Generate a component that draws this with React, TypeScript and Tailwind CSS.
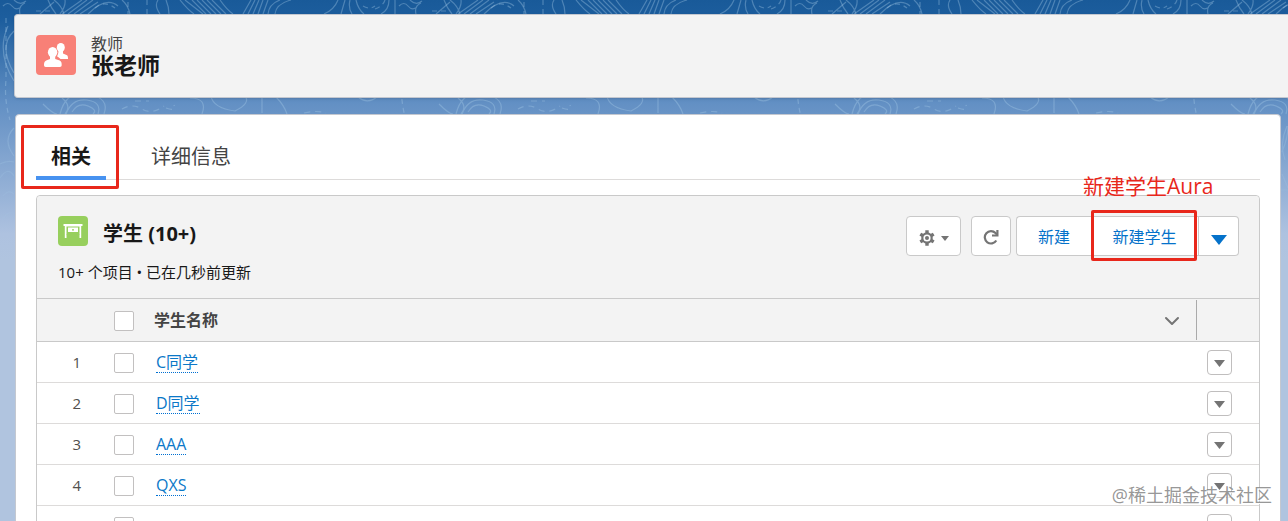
import { useState } from "react";
import { ChevronDown } from "lucide-react";

const students = ["C同学", "D同学", "AAA", "QXS", "zxc"];

const tabs = [
  { id: "related" as const, label: "相关" },
  { id: "details" as const, label: "详细信息" },
];

function Backdrop() {
  return (
    <svg className="absolute inset-0 h-full w-full" aria-hidden="true">
      <defs>
        <linearGradient id="sky" x1="0" y1="0" x2="0" y2="260" gradientUnits="userSpaceOnUse">
          <stop offset="0" stopColor="#195a99" />
          <stop offset="0.08" stopColor="#1d5e9e" />
          <stop offset="0.4" stopColor="#6390c4" />
          <stop offset="0.9" stopColor="#aec2e0" />
          <stop offset="1" stopColor="#b0c4df" />
        </linearGradient>
        <pattern id="contours" width="396" height="521" patternUnits="userSpaceOnUse">
          <g fill="none" stroke="#a9cdea" strokeOpacity="0.36" strokeWidth="1.2">
            <path d="M3 6q5-5 9 0t9 1M14 0q6 6 12 1M20 14q-2-8 5-11M54 0q8 6 10 14M48 0q3 8 8 14M60 14q6-8 5-14" />
            <path d="M40 14l14-12M62 14L82 0M68 14L87 0M74 14L93 0M80 14L98 2M88 14Q106-4 118 6M122 0q6 5 8 14M158 0q-4 6 2 14M166 0q3 7 3 14" />
            <path d="M180 0q8 10 14 14M185 0l18 14M192 0l14 14M197 0l14 14M202 0l14 14M207 0l14 14M212 0l14 14M220 0q7 10 13 14" />
            <path d="M243 14l8-14M248 14l7-14M253 14l6-14M258 14l5-14M263 14l5-14M268 14q1-10 12-14M275 14q1-10 16-14" />
            <path d="M324 14q10-4 14-14M341 14l4-14M350 0q-2 8 2 14M356 0q2 9 8 14M389 0q0 10-8 14M395 0v14" />
            <path strokeDasharray="5 4" d="M95 8q9-8 20 0M128 2v12M147 0v14M363 6q7 4 12 0M375 9q8-3 10-9M36 11h16M6 18v62q-2 20 4 40" />
            <path d="M60 114q6-24 28-20t16 20M66 114q6-16 21-14t11 14M72 112q6-10 16-6t5 8M43 104q10 10 14 10M62 98q10 8 3 16" />
            <path d="M190 98q18 0 12 16M211 96q2 12 24 15 16-8 10-15M262 97v16M276 97q8 8 11 17M358 97q10 8 20-1" />
            <path strokeDasharray="6 5" d="M122 109q10-6 20 0t22-3M166 108q10 4 8-3M135 101h14M304 113q14-3 22 0" />
            <path d="M14 31q-16 15 0 42M8 26q-12 26 6 55M14 128q-12 12 0 28M0 164q7-4 14-2M0 178q8-12 14-2M3 196q5-7 11-2M2 221q4-10 12-8" />
            <path d="M99 126q-8 18-2 34M94 152q6-14 6-26M93 190h7M94 174l6 14" />
          </g>
        </pattern>
        <linearGradient id="fade" x1="0" y1="0" x2="0" y2="1">
          <stop offset="0.2" stopColor="#fff" />
          <stop offset="0.5" stopColor="#000" />
        </linearGradient>
        <mask id="fadeMask">
          <rect width="100%" height="100%" fill="url(#fade)" />
        </mask>
      </defs>
      <rect width="100%" height="100%" fill="url(#sky)" />
      <rect width="100%" height="100%" fill="url(#contours)" mask="url(#fadeMask)" />
    </svg>
  );
}

function TeacherIcon() {
  return (
    <svg viewBox="0 0 40 40" className="size-10 rounded bg-[#f88077]" aria-hidden="true">
      <g fill="#fff">
        <ellipse cx="24.800" cy="12.500" rx="4" ry="4.500" />
        <path d="M22.500 15h4.500v3.500l4 1.800c.8.500 1 1.500 1 3.700h-7.500c-1-1.300-2.300-2.200-3.500-2.800 1-1.500 1.500-3.500 1.500-6.200z" />
      </g>
      <g fill="#fff" stroke="#f88077" strokeWidth="1.200" paintOrder="stroke">
        <path d="M14 20h5.200v4l4.500 1.600c1.500.7 2 2 2 4.400 0 1.200-.6 2-1.800 2H9.800C8.600 32 8 31.200 8 30c0-2.400.7-3.700 2.200-4.400L14 24z" />
      </g>
      <ellipse cx="16.600" cy="17.200" rx="4.700" ry="5.300" fill="#fff" />
    </svg>
  );
}

function DeskIcon() {
  return (
    <svg viewBox="0 0 30 30" className="size-[30px] rounded bg-[#97cf5d]" aria-hidden="true">
      <path fill="#fff" d="M5.500 8h19v2h-1.300v12h-1.700V18H8.500v4H6.800V10H5.500z" />
      <path fill="#97cf5d" d="M8.500 10.500h13v8h-13z" />
      <path fill="#fff" d="M10 11.500h10v4.500H10z" />
      <path fill="#97cf5d" d="M14 13.200h2v1.300h-2z" />
    </svg>
  );
}

function GearIcon() {
  return (
    <svg viewBox="0 0 16 16" className="size-4" aria-hidden="true">
      <g fill="none" stroke="#747474">
        <circle cx="8" cy="8" r="4.700" strokeWidth="2.200" />
        <path strokeWidth="3.400" d="M8 .3v2.700M8 13v2.700M1.300 4.100l2.400 1.400M12.300 10.500l2.400 1.400M1.300 11.900l2.400-1.400M12.300 5.500l2.400-1.400" />
      </g>
      <circle cx="8" cy="8" r="2" fill="#747474" />
    </svg>
  );
}

function RefreshIcon() {
  return (
    <svg viewBox="0 0 16 16" className="size-4" fill="none" stroke="#747474" aria-hidden="true">
      <path strokeWidth="2.200" d="M13.300 11.500A6.200 6.200 0 1 1 12.500 4L14 5.500" />
      <path strokeWidth="2.200" d="M14.400 1v5.500H9" />
    </svg>
  );
}

function Caret({ className }: { className: string }) {
  return (
    <svg viewBox="0 0 16 10" className={className} fill="currentColor" aria-hidden="true">
      <path d="M0 0h16L8 10z" />
    </svg>
  );
}

function Checkbox({ label }: { label: string }) {
  return (
    <input
      type="checkbox"
      aria-label={label}
      className="block size-5 appearance-none rounded-xs border border-[#c2c0c0] bg-white checked:bg-[#0070d2]"
    />
  );
}

function StudentTable() {
  return (
    <table className="w-full table-fixed border-collapse text-base">
      <thead>
        <tr className="h-[43px] border-y border-[#c9c9c9] bg-[#f3f3f3] text-left">
          <th className="w-[77px]"></th>
          <th className="w-10 pt-0.5">
            <Checkbox label="全选" />
          </th>
          <th className="pr-3 font-bold text-[#444]">
            <div className="flex h-[41px] items-center justify-between">
              学生名称
              <ChevronDown className="mt-0.5 size-6 text-[#747474]" />
            </div>
          </th>
          <th className="w-[63px]">
            <div className="h-10 border-l border-[#aaa]" />
          </th>
        </tr>
      </thead>
      <tbody>
        {students.map((name, i) => (
          <tr key={name} className="h-[41px] border-b border-[#dddbda]">
            <td className="pr-[33px] text-right text-[15px] text-[#514f4d]">{i + 1}</td>
            <td className="pt-0.5">
              <Checkbox label={`选择 ${name}`} />
            </td>
            <td className="pl-0.5">
              <a href="#" className="inline-block border-b border-dotted border-[#0070d2] leading-5 text-[#0b78c8]">
                {name}
              </a>
            </td>
            <td className="pl-[11px]">
              <button
                aria-label={`${name} 操作`}
                className="flex size-[25px] items-center justify-center rounded border border-[#c0bebe] bg-white pt-0.5 text-[#747474]"
              >
                <Caret className="h-[7px] w-[11px]" />
              </button>
            </td>
          </tr>
        ))}
      </tbody>
    </table>
  );
}

export default function App() {
  const [activeTab, setActiveTab] = useState<"related" | "details">("related");

  return (
    <div className="relative h-screen overflow-hidden font-['Open_Sans','Noto_Sans_CJK_SC',sans-serif] text-[#181818]">
      <Backdrop />

      <div className="relative pt-3.5">
        {/* Record header */}
        <header className="ml-3.5 flex h-[84px] items-start gap-[15px] rounded-l border border-r-0 border-[#c4c8d0] bg-[#f3f3f3] px-[21px] pt-5 shadow-sm">
          <TeacherIcon />
          <div>
            <p className="text-base leading-[18px] text-[#444]">教师</p>
            <h1 className="text-[23px] leading-6 font-bold">张老师</h1>
          </div>
        </header>

        <main className="mt-4 mr-[7px] ml-[15px] rounded border border-[#c4c8d0] bg-white px-5 pt-2.5">
          {/* Tabs */}
          <div role="tablist" className="relative flex h-[55px] border-b border-[#dddbda]">
            {tabs.map((tab) => (
              <button
                key={tab.id}
                role="tab"
                aria-selected={activeTab === tab.id}
                onClick={() => setActiveTab(tab.id)}
                className={`mr-[30px] h-[55px] border-b-4 px-[15px] pt-3 text-xl ${
                  activeTab === tab.id
                    ? "border-[#4792f0] font-bold"
                    : "border-transparent text-[#444]"
                }`}
              >
                {tab.label}
              </button>
            ))}
            <div className="pointer-events-none absolute top-0 -left-[15px] h-16 w-[98px] rounded-xs border-3 border-[#e8271b]" />
          </div>

          {/* Related list */}
          <section className="mt-[15px] rounded-t border border-[#c9c9c9]">
            <div className="flex h-[102px] justify-between rounded-t bg-[#f3f3f3] pt-5 pr-5 pl-[21px]">
              <div>
                <div className="flex items-start gap-[15px]">
                  <DeskIcon />
                  <h2 className="text-xl leading-9 font-bold">学生 (10+)</h2>
                </div>
                <p className="mt-2 text-[15px] leading-6">10+ 个项目 • 已在几秒前更新</p>
              </div>

              <div className="flex h-10 text-[#0572ca]">
                <button
                  aria-label="列表视图控件"
                  className="mr-2.5 flex w-[55px] items-center justify-center gap-1.5 rounded border border-[#c9c9c9] bg-white pt-1 text-[#747474]"
                >
                  <GearIcon />
                  <Caret className="h-[5px] w-2" />
                </button>
                <button
                  aria-label="刷新"
                  className="mr-[5px] flex w-10 items-center justify-center rounded border border-[#c9c9c9] bg-white pt-0.5"
                >
                  <RefreshIcon />
                </button>
                <button className="w-[75px] rounded-l border border-r-0 border-[#c9c9c9] bg-white pt-0.5 text-base">新建</button>
                <div className="relative flex">
                  <button className="w-[108px] border-y border-r border-[#c9c9c9] bg-white pt-0.5 text-base">
                    新建学生
                  </button>
                  <div className="pointer-events-none absolute -top-1.5 left-0 h-[51px] w-[106px] rounded-xs border-3 border-[#e8271b]" />
                  <span className="pointer-events-none absolute -top-11 -left-2 text-[21px] leading-7 whitespace-nowrap text-[#e8271b]">
                    新建学生Aura
                  </span>
                </div>
                <button
                  aria-label="更多操作"
                  className="flex w-10 items-center justify-center rounded-r border border-l-0 border-[#c9c9c9] bg-white pt-2"
                >
                  <Caret className="h-2.5 w-4" />
                </button>
              </div>
            </div>
            <StudentTable />
          </section>
        </main>
      </div>

      <div className="pointer-events-none absolute right-4 bottom-3 text-lg leading-7 text-[#8a8a8a]/90 [text-shadow:1px_1px_0_#fff]">
        @稀土掘金技术社区
      </div>
    </div>
  );
}
